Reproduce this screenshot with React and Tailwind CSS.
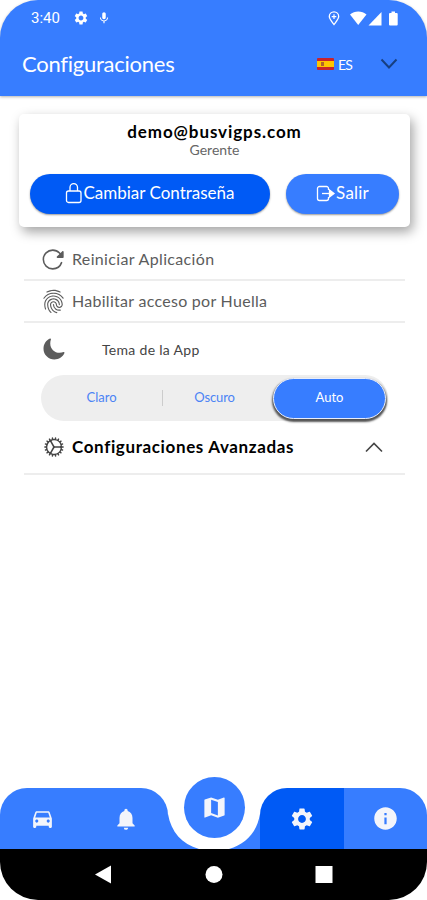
import React from 'react';
import {
  MdSettings,
  MdMic,
  MdDirectionsCar,
  MdNotifications,
  MdMap,
  MdInfo,
} from 'react-icons/md';
import {
  IoReloadOutline,
  IoFingerPrintOutline,
  IoMoon,
  IoCogOutline,
} from 'react-icons/io5';

const StatusBar = () => (
  <div className="flex h-[36px] items-center pl-[31px] pr-[29px] text-white">
    <span className="w-[42px] font-[Roboto] text-[15px] leading-none">3:40</span>
    <MdSettings className="size-4" />
    <MdMic className="ml-[8px] size-[14px]" />
    <svg className="ml-auto" width="12" height="15" viewBox="0 0 12 15" fill="none" stroke="white">
      <path d="M6 13.5C3.5 10.300 1.300 8 1.300 5.600a4.700 4.700 0 0 1 9.400 0C10.700 8 8.500 10.300 6 13.500z" strokeWidth="1.300" />
      <path d="M6 3.300v4.600M3.700 5.600h4.600" strokeWidth="1.200" />
    </svg>
    <svg className="ml-[10px]" width="48" height="15" viewBox="0 0 48 15" fill="white">
      <path d="M0 3.500C4.500-.5 12-.5 16.500 3.500L8.200 14z" />
      <path d="M31.500 1v13.500h-13z" />
      <path d="M41.500.5h3.500v1.500h1.700q1 0 1 1v10.500q0 1-1 1h-6.700q-1 0-1-1V3q0-1 1-1h1.500z" />
    </svg>
  </div>
);

const Header = () => (
  <header className="h-[96px] rounded-t-[38px] bg-[#377dff] shadow-[0_1px_3px_rgba(0,0,0,0.3)]">
    <StatusBar />
    <div className="flex h-[56px] items-center pl-[22px] pr-[29px] text-white">
      <h1 className="-mt-[2px] text-[22px] tracking-[-0.25px]">Configuraciones</h1>
      <svg className="ml-auto" width="17" height="12" viewBox="0 0 17 12">
        <rect width="17" height="12" rx="1" fill="#c8232c" />
        <rect y="3" width="17" height="6" fill="#ffc400" />
        <rect x="4" y="4" width="3" height="4" fill="#b2622a" />
      </svg>
      <span className="ml-[4px] text-[14px] tracking-[-0.8px]">ES</span>
      <svg className="ml-[28px]" width="18" height="12" viewBox="0 0 18 12" fill="none" stroke="#173f80" strokeWidth="2">
        <path d="M1.500 1.500L9 9.500l7.500-8" />
      </svg>
    </div>
  </header>
);

const LockIcon = () => (
  <svg width="18" height="22" viewBox="0 0 18 22" fill="none" stroke="white" strokeWidth="1.300">
    <rect x="1.500" y="9" width="14.500" height="11.500" rx="2" />
    <path d="M5 9V5.300a3.750 3.750 0 0 1 7.500 0V9" />
  </svg>
);

const ExitIcon = () => (
  <svg width="20" height="17" viewBox="0 0 20 17" fill="none" stroke="white" strokeWidth="1.300">
    <path d="M12.500 5V3.500a2 2 0 0 0-2-2h-7a2 2 0 0 0-2 2v10a2 2 0 0 0 2 2h7a2 2 0 0 0 2-2V12" />
    <path d="M6 8.500h10" />
    <path d="M13.500 5l4.500 3.500-4.500 3.500z" fill="white" />
  </svg>
);

const AccountCard = () => (
  <section className="ml-[19px] mt-[18px] h-[113px] w-[391px] rounded-[5px] bg-white px-[11px] pt-[7px] text-center shadow-[3px_5px_12px_rgba(0,0,0,0.36)]">
    <p className="text-[17px] font-bold leading-[22px] tracking-[0.9px] text-black">demo@busvigps.com</p>
    <p className="text-[14px] leading-[14px] text-[#666]">Gerente</p>
    <div className="mt-[17px] flex gap-[16px] text-[17px] text-white">
      <button className="flex h-[40px] w-[240px] items-center justify-center rounded-full bg-[#005af5] pb-[2px] shadow-[0_1px_2px_rgba(0,0,0,0.4)]">
        <LockIcon />
        <span>Cambiar Contraseña</span>
      </button>
      <button className="flex h-[40px] w-[113px] items-center justify-center rounded-full bg-[#377dff] pb-[2px] shadow-[0_1px_2px_rgba(0,0,0,0.4)]">
        <ExitIcon />
        <span className="tracking-[0.2px]">Salir</span>
      </button>
    </div>
  </section>
);

const Row = ({ icon, children }) => (
  <div className="flex h-[42px] items-center border-b-2 border-[#ededed] pl-[17px] text-[16px] text-[#5c5c5c]">
    <span className="w-[31px]">{icon}</span>
    {children}
  </div>
);

const ThemePicker = () => (
  <div className="mx-[17px] flex h-[46px] items-center rounded-full bg-[#eee] pr-[2px] text-[13px] text-[#4b83f5]">
    <span className="w-[121px] text-center">Claro</span>
    <span className="h-4 w-px bg-[#ccc]" />
    <span className="w-[103px] text-center tracking-[-0.1px]">Oscuro</span>
    <span className="ml-auto flex h-[41px] w-[113px] items-center justify-center rounded-full border border-[#e8eefc] bg-[#377dff] text-white shadow-[0_2px_2px_1px_rgba(0,0,0,0.65)]">
      Auto
    </span>
  </div>
);

const Settings = () => (
  <section className="ml-[24px] mr-[22px] mt-[12px]">
    <Row icon={<IoReloadOutline className="size-[25px]" />}>
      <span className="tracking-[0.35px]">Reiniciar Aplicación</span>
    </Row>
    <Row icon={<IoFingerPrintOutline className="size-[25px]" />}>
      <span className="tracking-[0.28px]">Habilitar acceso por Huella</span>
    </Row>
    <div className="flex h-[52px] items-center pl-[18px] text-[14px] text-[#444]">
      <IoMoon className="size-[24px] text-[#5c5c5c]" />
      <span className="ml-[36px] tracking-[0.3px]">Tema de la App</span>
    </div>
    <ThemePicker />
    <div className="flex h-[54px] items-center border-b-2 border-[#ededed] pl-[18px] pr-[21px] text-[17px] font-bold text-black">
      <IoCogOutline className="size-[24px] text-[#444]" />
      <span className="ml-[6px] tracking-[0.63px]">Configuraciones Avanzadas</span>
      <svg className="ml-auto" width="20" height="12" viewBox="0 0 20 12" fill="none" stroke="#444" strokeWidth="1.600">
        <path d="M2 10.500l8-8 8 8" />
      </svg>
    </div>
  </section>
);

const TabBar = () => (
  <nav className="relative flex h-[61px] text-[#f3f5fb]">
    <div className="flex w-[168px] rounded-t-[27px] bg-[#377dff]">
      <span className="flex w-[84px] items-center justify-center"><MdDirectionsCar className="size-[25px]" /></span>
      <span className="flex w-[84px] items-center justify-center"><MdNotifications className="size-[26px]" /></span>
    </div>
    <svg width="92" height="61" viewBox="0 0 92 61" fill="#377dff">
      <path d="M0 26C3 44 14 56 31 61H0z" />
      <path d="M92 26C89 44 78 56 61 61H92z" />
    </svg>
    <div className="flex flex-1 overflow-hidden rounded-t-[27px]">
      <span className="flex w-[84px] items-center justify-center bg-[#005af5]"><MdSettings className="size-[26px]" /></span>
      <span className="flex flex-1 items-center justify-center bg-[#377dff]"><MdInfo className="size-[27px]" /></span>
    </div>
    <span className="absolute -top-[11px] left-[184px] flex size-[61px] items-center justify-center rounded-full bg-[#377dff]">
      <MdMap className="size-[27px]" />
    </span>
  </nav>
);

const SystemNav = () => (
  <div className="h-[51px] rounded-b-[38px] bg-black">
    <svg width="427" height="51" viewBox="0 0 427 51" fill="white">
      <path d="M111 16.500v18L95 25.500z" />
      <circle cx="214" cy="25.500" r="8.500" />
      <rect x="315.500" y="17" width="17" height="17" />
    </svg>
  </div>
);

const App = () => {
  return (
    <div className="flex h-[900px] w-[427px] flex-col overflow-hidden bg-white font-[Lato,sans-serif]">
      <Header />
      <main className="flex-1">
        <AccountCard />
        <Settings />
      </main>
      <TabBar />
      <SystemNav />
    </div>
  );
};

export default App;
